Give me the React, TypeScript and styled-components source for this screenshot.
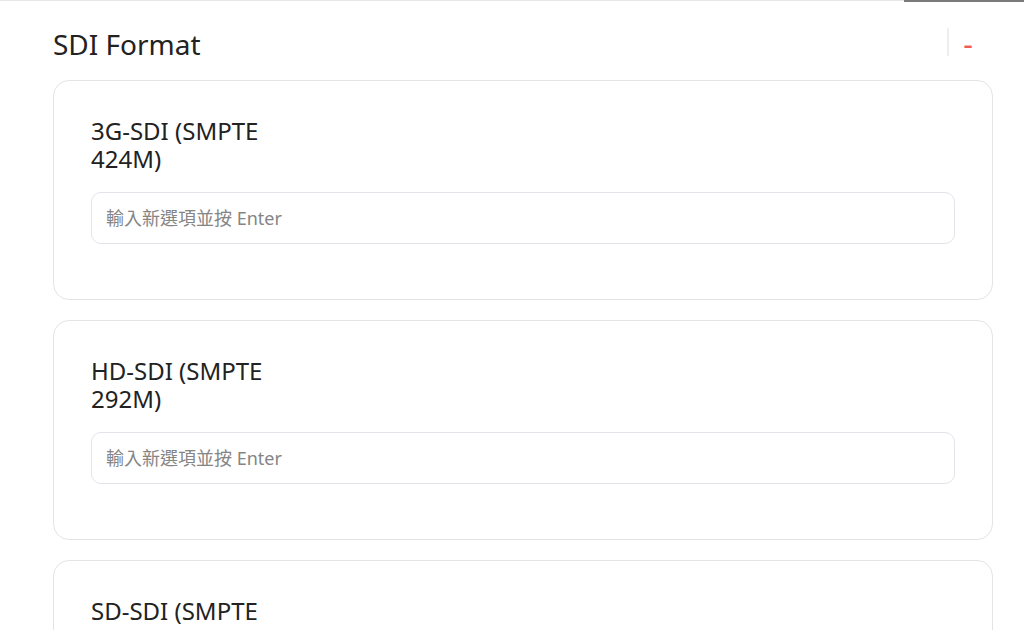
import React from "react";
import styled, { createGlobalStyle } from "styled-components";

const GlobalStyle = createGlobalStyle`
  html, body { margin: 0; padding: 0; background: #ffffff; }
  body { font-family: "Noto Sans", "Noto Sans CJK TC", sans-serif; color: #222; overflow: hidden; }
  * { box-sizing: border-box; }
`;

const TopStrip = styled.div`
  display: flex;
  height: 2px;
  align-items: flex-start;
`;

const StripLight = styled.div`
  flex: 1;
  height: 1px;
  background: #e6e6e6;
`;

const StripDark = styled.div`
  width: 120px;
  height: 2px;
  background: #7a7a7a;
`;

const Page = styled.div`
  padding: 0 31px 0 53px;
`;

const Header = styled.div`
  display: flex;
  align-items: center;
  justify-content: space-between;
  height: 78px;
  padding-top: 6px;
`;

const Title = styled.h2`
  margin: 0;
  font-size: 28px;
  font-weight: 400;
  color: #222;
`;

const Actions = styled.div`
  display: flex;
  align-items: center;
  height: 28px;
  margin-bottom: 5px;
`;

const Divider = styled.div`
  width: 2px;
  height: 28px;
  background: #eeeeee;
`;

const RemoveButton = styled.button`
  border: none;
  background: transparent;
  color: #ef5a5a;
  font-family: "Noto Sans", sans-serif;
  font-size: 30px;
  padding: 0 20px 0 14px;
  margin-top: 4px;
  cursor: pointer;
  line-height: 1;
`;

const CardList = styled.div`
  display: flex;
  flex-direction: column;
  gap: 20px;
`;

const Card = styled.div`
  border: 1px solid #e4e4e4;
  border-radius: 16px;
  padding: 36px 37px 55px 37px;
  background: #fff;
`;

const Label = styled.div`
  width: 200px;
  font-size: 24px;
  line-height: 28px;
  color: #222;
  margin-bottom: 19px;
`;

const Input = styled.input`
  display: block;
  width: 100%;
  height: 52px;
  border: 1px solid #e2e4ea;
  border-radius: 10px;
  padding: 0 14px;
  font-family: "Noto Sans", "Noto Sans CJK TC", sans-serif;
  font-size: 18px;
  color: #333;
  outline: none;
  &::placeholder { color: #858585; }
`;

const formats = [
  "3G-SDI (SMPTE 424M)",
  "HD-SDI (SMPTE 292M)",
  "SD-SDI (SMPTE 259M)",
];

export default function App() {
  return (
    <>
      <GlobalStyle />
      <TopStrip>
        <StripLight />
        <StripDark />
      </TopStrip>
      <Page>
        <Header>
          <Title>SDI Format</Title>
          <Actions>
            <Divider />
            <RemoveButton>-</RemoveButton>
          </Actions>
        </Header>
        <CardList>
          {formats.map((f) => (
            <Card key={f}>
              <Label>{f}</Label>
              <Input placeholder="輸入新選項並按 Enter" />
            </Card>
          ))}
        </CardList>
      </Page>
    </>
  );
}
